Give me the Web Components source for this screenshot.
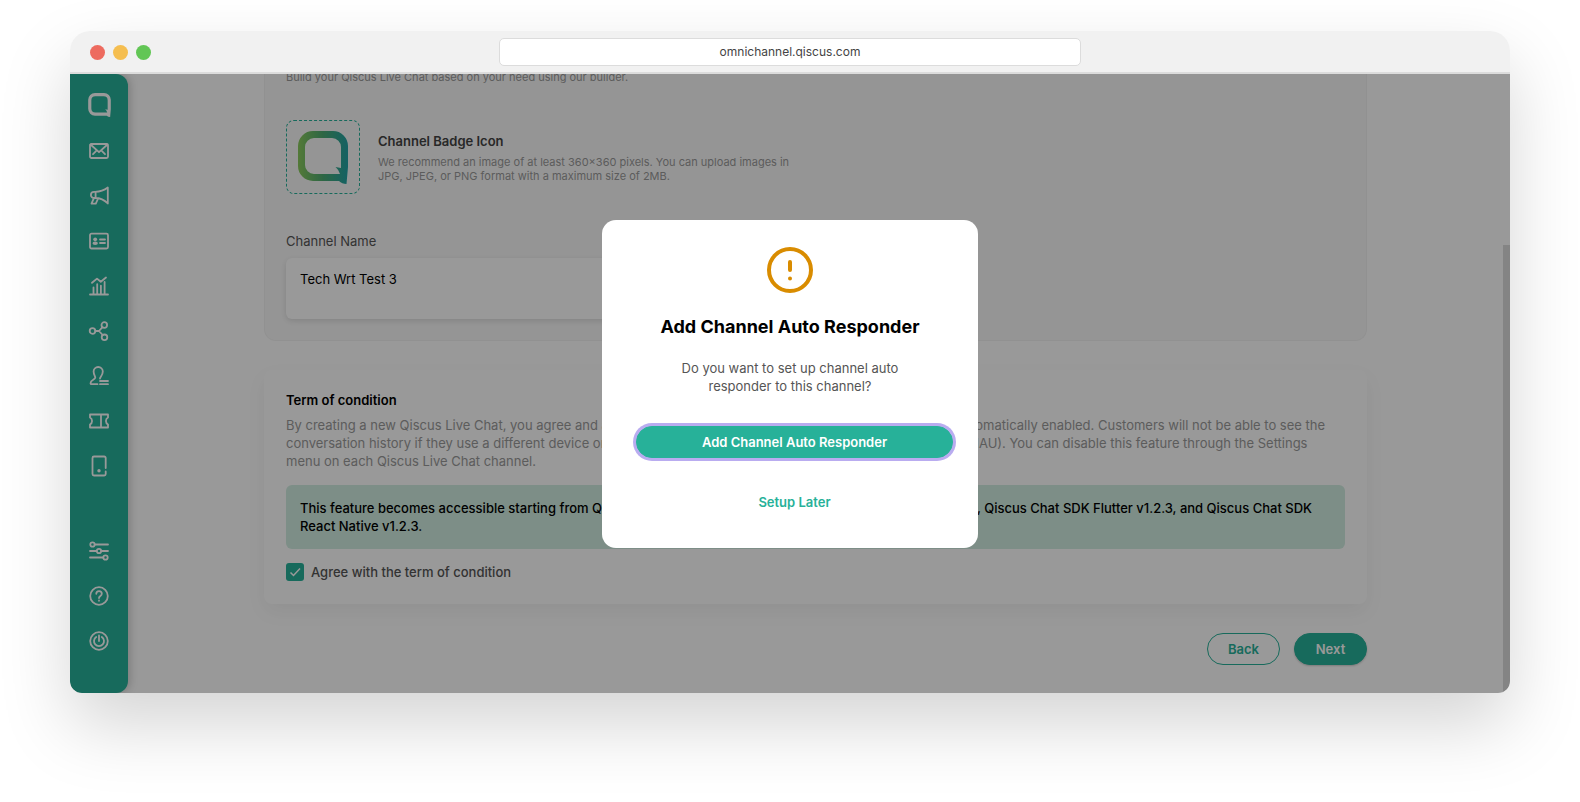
<!DOCTYPE html>
<html lang="en">
<head>
<meta charset="utf-8">
<meta name="viewport" content="width=device-width, initial-scale=1">
<title>Qiscus Omnichannel</title>
<style>
  body {
    margin: 0;
    min-height: 100vh;
    box-sizing: border-box;
    padding: 31px 70px;
    overflow: hidden;
    background: #fff;
    font-family: Inter, "Liberation Sans", sans-serif;
    font-size: 13px;
    line-height: 18px;
    --brand: #27b199;
  }
</style>
</head>
<body>
  <browser-window url="omnichannel.qiscus.com">
    <side-nav slot="nav"></side-nav>
    <channel-form></channel-form>
    <confirm-dialog slot="overlay">
      <span slot="title">Add Channel Auto Responder</span>
      <span slot="text">Do you want to set up channel auto responder to this channel?</span>
      <span slot="confirm">Add Channel Auto Responder</span>
      <span slot="cancel">Setup Later</span>
    </confirm-dialog>
  </browser-window>

  <script>
    // 24x24 stroke icons for the sidebar
    const icons = {
      inbox: `<rect x="3" y="5" width="18" height="14" rx="1.5"/><path d="M3.500 5.500 12 13.200l8.500-7.700M6 15.200l3-3M18 15.200l-3-3"/>`,
      broadcast: `<path d="M8.200 7.800C13 7.800 17 6.500 20.800 3.500v16C17 15.500 13 14 8.200 14H7a3.100 3.100 0 0 1 0-6.200h1.200M8.600 7.800V14M6.800 14.400l-2.300 5.300h4.300l2.300-5.200"/>`,
      contacts: `<rect x="3" y="4.700" width="18" height="14.800" rx="1.500"/><path d="M13 10.500h5M13 14h5"/><circle class="dot" cx="8.200" cy="10.300" r="1.900"/><ellipse class="dot" cx="8.200" cy="14.300" rx="2.700" ry="1.700"/>`,
      analytics: `<path d="M3 20.500h18M6.500 20v-6.500M10.200 20V10.200M13.900 20v-8.300M17.600 20V8M5 8.800l5-4.200 3.800 3.200 5.200-4.300"/>`,
      integration: `<circle cx="5.500" cy="12" r="2.800"/><circle cx="17.300" cy="6" r="2.800"/><circle cx="17.500" cy="18.300" r="2.800"/><path d="M8.300 12H12l3.500-3.800M12 12l3.700 4"/>`,
      agents: `<path d="M13 14.500c0-1.300 2.800-3 2.800-6.900a4.600 4.600 0 0 0-9.200 0c0 3 1.700 4.400 1.700 6 0 2.200-4.800 2.400-4.800 5.600 0 .7.300 1 1 1h6M13 17H21M13 20.200H21"/>`,
      ticket: `<path d="M3 5.500h18v3a4 4 0 0 0 0 7v3H3v-3a4 4 0 0 0 0-7zM14 5.500v13"/>`,
      device: `<path d="M18.700 14V4a1.500 1.500 0 0 0-1.500-1.500H7A1.500 1.500 0 0 0 5.500 4v16A1.500 1.500 0 0 0 7 21.500h10.200a1.500 1.500 0 0 0 1.500-1.500v-2.500"/><circle class="dot" cx="12" cy="16.700" r="1.700"/>`,
      settings: `<path d="M7.700 5.500H21M3 12h6.500M14.500 12H21M3 18.500h13.300"/><circle cx="5.500" cy="5.500" r="2.200"/><circle cx="12" cy="12" r="2.200"/><circle cx="18.500" cy="18.500" r="2.200"/>`,
      help: `<circle cx="12" cy="12" r="8.800"/><path d="M9.300 9.800c0-3.500 5.500-3.500 5.500 0 0 2.200-2.800 2-2.800 4.200M12 16.500v.3"/>`,
      logout: `<circle cx="12" cy="12" r="8.800"/><path d="M9.200 8a5 5 0 1 0 5.600 0M12 6.500v5.500"/>`
    };

    // Q shaped speech bubble, takes its fill from the caller
    const qMark = (fill) => `
      <path fill="${fill}" fill-rule="evenodd" d="M15 0H35A15 15 0 0 1 50 15V36L48.500 53Q44 53 41 50H15A15 15 0 0 1 0 35V15A15 15 0 0 1 15 0ZM16 7A9 9 0 0 0 7 16V34A9 9 0 0 0 16 43H42Q41 39 37.500 36L43 37V16A9 9 0 0 0 34 7Z"/>`;

    customElements.define(
      'browser-window',
      class extends HTMLElement {
        constructor() {
          super();
          const shadowRoot = this.attachShadow({ mode: 'open' });
          shadowRoot.innerHTML = `
            <style>
              :host {
                display: block;
                border-radius: 20px 20px 12px 12px;
                box-shadow: 0 32px 70px rgba(0, 0, 0, 0.17);
              }

              .bar {
                display: grid;
                grid-template-columns: 1fr minmax(200px, 582px) 1fr;
                align-items: center;
                height: 41px;
                background: #f1f1f1;
                border-bottom: 2px solid #dcdcdc;
                border-radius: 20px 20px 0 0;
              }

              .dots {
                display: flex;
                gap: 8px;
                padding: 2px 0 0 20px;
              }

              .dots i {
                width: 15px;
                height: 15px;
                border-radius: 50%;
                background: #ed6b5f;
              }

              .dots i:nth-child(2) {
                background: #f5be50;
              }

              .dots i:nth-child(3) {
                background: #62c655;
              }

              input {
                box-sizing: border-box;
                width: 100%;
                height: 28px;
                border: 1px solid #dcdcdc;
                border-radius: 5px;
                background: #fff;
                color: #444;
                font: inherit;
                font-size: 12px;
                text-align: center;
              }

              .view {
                position: relative;
                display: flex;
                overflow: hidden;
                border-radius: 0 0 12px 12px;
                background: #fff;
              }

              main {
                flex: 1;
                min-width: 0;
              }

              .scroll {
                display: flex;
                width: 7px;
                padding-top: 171px;
              }

              .scroll i {
                flex: 1;
                background: #dcdcdc;
              }

              .overlay {
                position: absolute;
                inset: 0;
                display: flex;
                align-items: center;
                justify-content: center;
                background: rgba(0, 0, 0, 0.4);
              }
            </style>
            <header class="bar">
              <div class="dots"><i></i><i></i><i></i></div>
              <input type="text" aria-label="Address" value="${this.getAttribute('url')}">
            </header>
            <div class="view">
              <slot name="nav"></slot>
              <main><slot></slot></main>
              <div class="scroll"><i></i></div>
              <div class="overlay"><slot name="overlay"></slot></div>
            </div>
          `;
        }
      }
    );

    customElements.define(
      'nav-item',
      class extends HTMLElement {
        constructor() {
          super();
          const icon = this.getAttribute('icon');
          const shadowRoot = this.attachShadow({ mode: 'open' });
          shadowRoot.innerHTML = `
            <style>
              :host {
                display: block;
              }

              a {
                display: flex;
                align-items: center;
                justify-content: center;
                height: 45px;
              }

              svg {
                width: 24px;
                height: 24px;
                fill: none;
                stroke: #fff;
                stroke-width: 1.8;
                stroke-linecap: round;
                stroke-linejoin: round;
              }

              .dot {
                fill: #fff;
                stroke: none;
              }
            </style>
            <a href="#${icon}" aria-label="${icon}"><svg viewBox="0 0 24 24">${icons[icon]}</svg></a>
          `;
        }
      }
    );

    customElements.define(
      'side-nav',
      class extends HTMLElement {
        constructor() {
          super();
          const items = (names) => names.map((name) => `<nav-item icon="${name}"></nav-item>`).join('');
          const shadowRoot = this.attachShadow({ mode: 'open' });
          shadowRoot.innerHTML = `
            <style>
              :host {
                display: flex;
                flex-direction: column;
                flex: none;
                box-sizing: border-box;
                width: 58px;
                padding: 19px 0 30px;
                border-radius: 0 12px 12px 12px;
                background: var(--brand);
                box-shadow: 2px 0 8px rgba(0, 0, 0, 0.2);
              }

              .logo {
                display: flex;
                justify-content: center;
                height: 35px;
              }

              .logo svg {
                width: 23px;
                height: 24px;
              }

              nav + nav {
                margin-top: auto;
              }
            </style>
            <a class="logo" href="#home" aria-label="home"><svg viewBox="0 0 50 53">${qMark('#fff')}</svg></a>
            <nav>${items(['inbox', 'broadcast', 'contacts', 'analytics', 'integration', 'agents', 'ticket', 'device'])}</nav>
            <nav>${items(['settings', 'help', 'logout'])}</nav>
          `;
        }
      }
    );

    customElements.define(
      'pill-button',
      class extends HTMLElement {
        constructor() {
          super();
          const shadowRoot = this.attachShadow({ mode: 'open' });
          shadowRoot.innerHTML = `
            <style>
              :host {
                display: block;
                min-width: 73px;
              }

              button {
                box-sizing: border-box;
                width: 100%;
                height: 32px;
                padding: 0 20px;
                border: 1px solid var(--brand);
                border-radius: 16px;
                background: var(--brand);
                color: #fff;
                font: inherit;
                font-weight: 600;
                cursor: pointer;
              }

              :host([raised]) button {
                box-shadow: 0 1px 2px rgba(0, 0, 0, 0.2);
              }

              :host([outlined]) button {
                background: #fff;
                color: var(--brand);
              }

              :host([plain]) button {
                border-color: transparent;
                background: none;
                color: var(--brand);
              }

              :host([ring]) button {
                box-shadow: 0 0 0 3px #b9acf0;
              }
            </style>
            <button type="button"><slot></slot></button>
          `;
        }
      }
    );

    customElements.define(
      'channel-form',
      class extends HTMLElement {
        constructor() {
          super();
          const shadowRoot = this.attachShadow({ mode: 'open' });
          shadowRoot.innerHTML = `
            <style>
              * {
                box-sizing: border-box;
              }

              :host {
                display: block;
                padding: 0 136px 28px;
              }

              p,
              h2,
              h3 {
                margin: 0;
                font-size: inherit;
              }

              .builder {
                /* scrolled: the card starts above the visible area */
                margin-top: -4px;
                padding: 0 21px 21px;
                border: 1px solid #f2f2f2;
                border-top: 0;
                border-radius: 0 0 12px 12px;
                background: #f9f9f9;
              }

              .hint {
                color: #9a9a9a;
                font-size: 11px;
                line-height: 14px;
              }

              .badge {
                display: flex;
                align-items: center;
                gap: 18px;
                margin: 36px 0 38px;
              }

              .badge__icon {
                display: flex;
                justify-content: center;
                align-items: center;
                width: 74px;
                height: 74px;
                border: 1px dashed var(--brand);
                border-radius: 8px;
              }

              .badge__icon svg {
                width: 50px;
                height: 53px;
              }

              .badge__text {
                max-width: 420px;
              }

              .badge h3 {
                margin-bottom: 5px;
                color: #444;
                font-weight: 600;
              }

              .name {
                display: block;
                margin-bottom: 8px;
                color: #555;
              }

              textarea {
                display: block;
                width: 50%;
                height: 61px;
                padding: 12px 14px;
                border: 0;
                border-radius: 6px;
                background: #fff;
                box-shadow: 0 2px 6px rgba(0, 0, 0, 0.12);
                color: #000;
                font: inherit;
                resize: none;
              }

              .terms {
                margin-top: 29px;
                padding: 21px 22px 23px;
                border-radius: 8px;
                background: #fff;
                box-shadow: 0 8px 20px rgba(0, 0, 0, 0.05);
              }

              .terms h2 {
                margin-bottom: 7px;
                font-weight: 600;
              }

              .terms p {
                color: #9a9a9a;
              }

              .terms .notice {
                margin: 15px 0 14px;
                padding: 14px;
                border-radius: 6px;
                background: #d0ede1;
                color: #000;
                font-weight: 500;
              }

              .agree {
                display: flex;
                align-items: center;
                gap: 7px;
                color: #555;
                font-weight: 500;
              }

              .agree input {
                appearance: none;
                width: 18px;
                height: 18px;
                margin: 0;
                border-radius: 3px;
                background: var(--brand);
              }

              .agree span {
                display: grid;
              }

              .agree span > * {
                grid-area: 1 / 1;
              }

              .agree svg {
                width: 18px;
                height: 18px;
                fill: none;
                stroke: #fff;
                stroke-width: 1.5;
                pointer-events: none;
              }

              .actions {
                display: flex;
                justify-content: flex-end;
                gap: 14px;
                margin-top: 29px;
              }
            </style>
            <section class="builder">
              <p class="hint">Build your Qiscus Live Chat based on your need using our builder.</p>
              <div class="badge">
                <div class="badge__icon">
                  <svg viewBox="0 0 50 53">
                    <defs>
                      <linearGradient id="q">
                        <stop offset="0" stop-color="#8ccb5e"/>
                        <stop offset="0.5" stop-color="#4cab72"/>
                        <stop offset="1" stop-color="#22a3a6"/>
                      </linearGradient>
                    </defs>
                    ${qMark('url(#q)')}
                  </svg>
                </div>
                <div class="badge__text">
                  <h3>Channel Badge Icon</h3>
                  <p class="hint">We recommend an image of at least 360×360 pixels. You can upload images in JPG, JPEG, or PNG format with a maximum size of 2MB.</p>
                </div>
              </div>
              <label class="name" for="name">Channel Name</label>
              <textarea id="name">Tech Wrt Test 3</textarea>
            </section>
            <section class="terms">
              <h2>Term of condition</h2>
              <p>By creating a new Qiscus Live Chat, you agree and acknowledge that chat history feature for all users will be automatically enabled. Customers will not be able to see the conversation history if they use a different device or browser, and can affect the total of Monthly Active Users (MAU). You can disable this feature through the Settings menu on each Qiscus Live Chat channel.</p>
              <p class="notice">This feature becomes accessible starting from Qiscus Chat SDK Android v1.2.3, Qiscus Chat SDK Swift v1.2.3, Qiscus Chat SDK Flutter v1.2.3, and Qiscus Chat SDK React Native v1.2.3.</p>
              <label class="agree" for="agree">
                <span>
                  <input id="agree" type="checkbox" checked>
                  <svg viewBox="0 0 18 18"><path d="M4.500 9.500l3 3 6.500-7"/></svg>
                </span>
                Agree with the term of condition
              </label>
            </section>
            <div class="actions">
              <pill-button outlined>Back</pill-button>
              <pill-button raised>Next</pill-button>
            </div>
          `;
        }
      }
    );

    customElements.define(
      'confirm-dialog',
      class extends HTMLElement {
        constructor() {
          super();
          const shadowRoot = this.attachShadow({ mode: 'open' });
          shadowRoot.innerHTML = `
            <style>
              :host {
                display: block;
                box-sizing: border-box;
                width: 376px;
                padding: 27px 25px 30px;
                border-radius: 14px;
                background: #fff;
                text-align: center;
              }

              svg {
                display: block;
                width: 46px;
                height: 46px;
                margin: 0 auto;
                fill: none;
                stroke: #d98c00;
                stroke-width: 4;
                stroke-linecap: round;
              }

              h1 {
                margin: 22px 0 20px;
                font-size: 18px;
                line-height: 24px;
                font-weight: 700;
              }

              p {
                max-width: 240px;
                margin: 0 auto 31px;
                color: #555;
              }

              .buttons {
                display: grid;
                gap: 28px;
                padding-left: 9px;
              }
            </style>
            <div role="dialog" aria-labelledby="title">
              <svg viewBox="0 0 46 46">
                <circle cx="23" cy="23" r="21"/>
                <path d="M23 15v8M23 31.500v.1"/>
              </svg>
              <h1 id="title"><slot name="title"></slot></h1>
              <p><slot name="text"></slot></p>
              <div class="buttons">
                <pill-button ring><slot name="confirm"></slot></pill-button>
                <pill-button plain><slot name="cancel"></slot></pill-button>
              </div>
            </div>
          `;
        }
      }
    );
  </script>
</body>
</html>
